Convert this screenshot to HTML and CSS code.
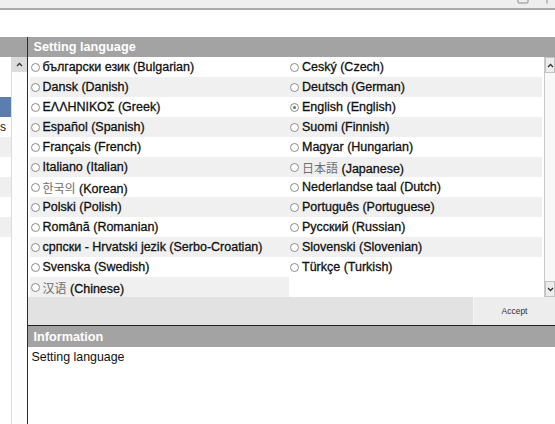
FILE: index.html
```html
<!DOCTYPE html>
<html>
<head>
<meta charset="utf-8">
<link rel="stylesheet" href="styles.css">
</head>
<body>
<div class="topbar">
  <svg class="ico-box" width="12" height="4" viewBox="0 0 12 4"><path d="M1 0 V2 Q1 3 2 3 H10 Q11 3 11 2 V0" fill="none" stroke="#8a8a8a" stroke-width="1"/></svg>
  <svg class="ico-tick" width="2" height="4" viewBox="0 0 2 4"><path d="M1 0 V3.5" stroke="#8a8a8a" stroke-width="1"/></svg>
</div>
<div class="blank"></div>
<div class="workspace">
  <div class="side">
    <div class="side-head"></div>
    <div class="side-body">
      <div class="side-list">
        <div class="srow"></div>
        <div class="srow"></div>
        <div class="srow sel"></div>
        <div class="srow txt"><span>s</span></div>
        <div class="srow alt"></div>
        <div class="srow"></div>
        <div class="srow alt"></div>
        <div class="srow"></div>
        <div class="srow alt"></div>
      </div>
      <div class="side-scroll">
        <div class="sbtn"><svg width="7" height="5" viewBox="0 0 7 5"><path d="M1 4 L3.5 1.5 L6 4" fill="none" stroke="#333" stroke-width="1.3"/></svg></div>
      </div>
    </div>
  </div>
  <div class="main">
    <div class="head">Setting language</div>
    <div class="listwrap">
      <div class="grid">
        <div class="cell"><i class="radio"></i><span>български език (Bulgarian)</span></div>
        <div class="cell"><i class="radio"></i><span>Ceský (Czech)</span></div>
        <div class="cell alt"><i class="radio"></i><span>Dansk (Danish)</span></div>
        <div class="cell alt"><i class="radio"></i><span>Deutsch (German)</span></div>
        <div class="cell"><i class="radio"></i><span>ΕΛΛΗΝΙΚΟΣ (Greek)</span></div>
        <div class="cell"><i class="radio on"></i><span>English (English)</span></div>
        <div class="cell alt"><i class="radio"></i><span>Español (Spanish)</span></div>
        <div class="cell alt"><i class="radio"></i><span>Suomi (Finnish)</span></div>
        <div class="cell"><i class="radio"></i><span>Français (French)</span></div>
        <div class="cell"><i class="radio"></i><span>Magyar (Hungarian)</span></div>
        <div class="cell alt"><i class="radio"></i><span>Italiano (Italian)</span></div>
        <div class="cell alt"><i class="radio"></i><span><b class="cjk kr">日本語</b> (Japanese)</span></div>
        <div class="cell"><i class="radio"></i><span><b class="cjk kr">한국의</b> (Korean)</span></div>
        <div class="cell"><i class="radio"></i><span>Nederlandse taal (Dutch)</span></div>
        <div class="cell alt"><i class="radio"></i><span>Polski (Polish)</span></div>
        <div class="cell alt"><i class="radio"></i><span>Português (Portuguese)</span></div>
        <div class="cell"><i class="radio"></i><span>Română (Romanian)</span></div>
        <div class="cell"><i class="radio"></i><span>Русский (Russian)</span></div>
        <div class="cell alt"><i class="radio"></i><span>српски - Hrvatski jezik (Serbo-Croatian)</span></div>
        <div class="cell alt"><i class="radio"></i><span>Slovenski (Slovenian)</span></div>
        <div class="cell"><i class="radio"></i><span>Svenska (Swedish)</span></div>
        <div class="cell"><i class="radio"></i><span>Türkçe (Turkish)</span></div>
        <div class="cell alt"><i class="radio"></i><span><b class="cjk sc">汉语</b> (Chinese)</span></div>
        <div class="cell empty"></div>
      </div>
      <div class="vscroll">
        <div class="vbtn"><svg width="7" height="5" viewBox="0 0 7 5"><path d="M1 4 L3.5 1.5 L6 4" fill="none" stroke="#333" stroke-width="1.3"/></svg></div>
        <div class="track"></div>
        <div class="vbtn"><svg width="7" height="5" viewBox="0 0 7 5"><path d="M1 1 L3.5 3.5 L6 1" fill="none" stroke="#333" stroke-width="1.3"/></svg></div>
      </div>
    </div>
    <div class="actions">
      <div class="accept">Accept</div>
    </div>
    <div class="info-head">Information</div>
    <div class="info-body">Setting language</div>
  </div>
</div>
</body>
</html>
```
FILE: styles.css
```css
* { box-sizing: border-box; }
html, body {
  margin: 0;
  padding: 0;
  width: 555px;
  height: 424px;
  overflow: hidden;
  background: #ffffff;
  font-family: "Liberation Sans", Arial, sans-serif;
  color: #111;
}
.topbar {
  height: 10px;
  background: #eeeeee;
  border-bottom: 2px solid #a9a9a9;
  display: flex;
  justify-content: flex-end;
  align-items: flex-start;
  padding-right: 7px;
  gap: 17px;
}
.ico-box, .ico-tick { display: block; }
.blank { height: 27px; }
.workspace {
  display: flex;
  height: 387px;
}
.side {
  width: 27.5px;
  border-right: 1.5px solid #2b2b2b;
  display: flex;
  flex-direction: column;
}
.side-head {
  height: 20px;
  background: #a3a3a3;
}
.side-body {
  flex: 1;
  display: flex;
}
.side-list {
  width: 12px;
  border-right: 1px solid #dcdcdc;
}
.srow {
  height: 20px;
  background: #fff;
  white-space: nowrap;
  display: flex;
  justify-content: flex-start;
  align-items: center;
  font-size: 12px;
}
.srow.alt { background: #efefef; }
.srow.sel { background: #5a7ead; }
.srow.txt span { padding-left: 0; }
.side-scroll {
  flex: 1;
  background: #fdfdfd;
}
.sbtn {
  height: 15px;
  background: #dcdcdc;
  display: flex;
  align-items: center;
  justify-content: center;
}
.sbtn svg, .vbtn svg { display: block; }
.main {
  flex: 1;
  display: flex;
  flex-direction: column;
}
.head, .info-head {
  height: 20px;
  background: #a3a3a3;
  color: #fff;
  font-weight: bold;
  font-size: 12.7px;
  padding-left: 6px;
  display: flex;
  align-items: center;
}
.listwrap {
  height: 240px;
  display: flex;
}
.grid {
  flex: 1;
  display: grid;
  grid-template-columns: 259.5px 1fr;
  grid-auto-rows: 20px;
  padding-left: 2px;
  padding-right: 2px;
}
.cell {
  display: flex;
  align-items: center;
  background: #fff;
  font-size: 12.5px;
  white-space: nowrap;
  -webkit-text-stroke: 0.3px #111;
}
.cell.alt { background: #f0f0f0; }
.cell.empty { background: #fff; }
.radio {
  width: 9px;
  height: 9px;
  border: 1px solid #8c8c8c;
  border-radius: 50%;
  background: #fff;
  margin-left: 1px;
  margin-right: 3px;
  flex: none;
  display: flex;
  align-items: center;
  justify-content: center;
}
.radio.on::after {
  content: "";
  width: 3px;
  height: 3px;
  border-radius: 50%;
  background: #6f6f6f;
}
.cjk {
  font-weight: normal;
  color: #6e6e6e;
  -webkit-text-stroke: 0;
  font-size: 12px;
}
.cjk.kr { font-family: "Noto Sans CJK KR", "Noto Sans CJK JP", sans-serif; }
.cjk.sc { font-family: "Noto Sans CJK SC", sans-serif; }
.vscroll {
  width: 11px;
  border-left: 1px solid #c9c9c9;
  background: #f8f8f8;
  display: flex;
  flex-direction: column;
}
.vbtn {
  height: 16px;
  background: #ececec;
  border: 1px solid #c2c2c2;
  display: flex;
  align-items: center;
  justify-content: center;
}
.track { flex: 1; }
.actions {
  height: 28px;
  background: #e2e2e2;
  display: flex;
  justify-content: flex-end;
}
.accept {
  width: 82px;
  background: #ededed;
  border-left: 1px solid #f6f6f6;
  font-size: 8.5px;
  color: #333;
  display: flex;
  align-items: center;
  justify-content: center;
}
.info-head {
  height: 22px;
  border-top: 1.5px solid #222;
}
.info-body {
  flex: 1;
  padding: 3px 4px;
  font-size: 12.4px;
  color: #111;
}
```
